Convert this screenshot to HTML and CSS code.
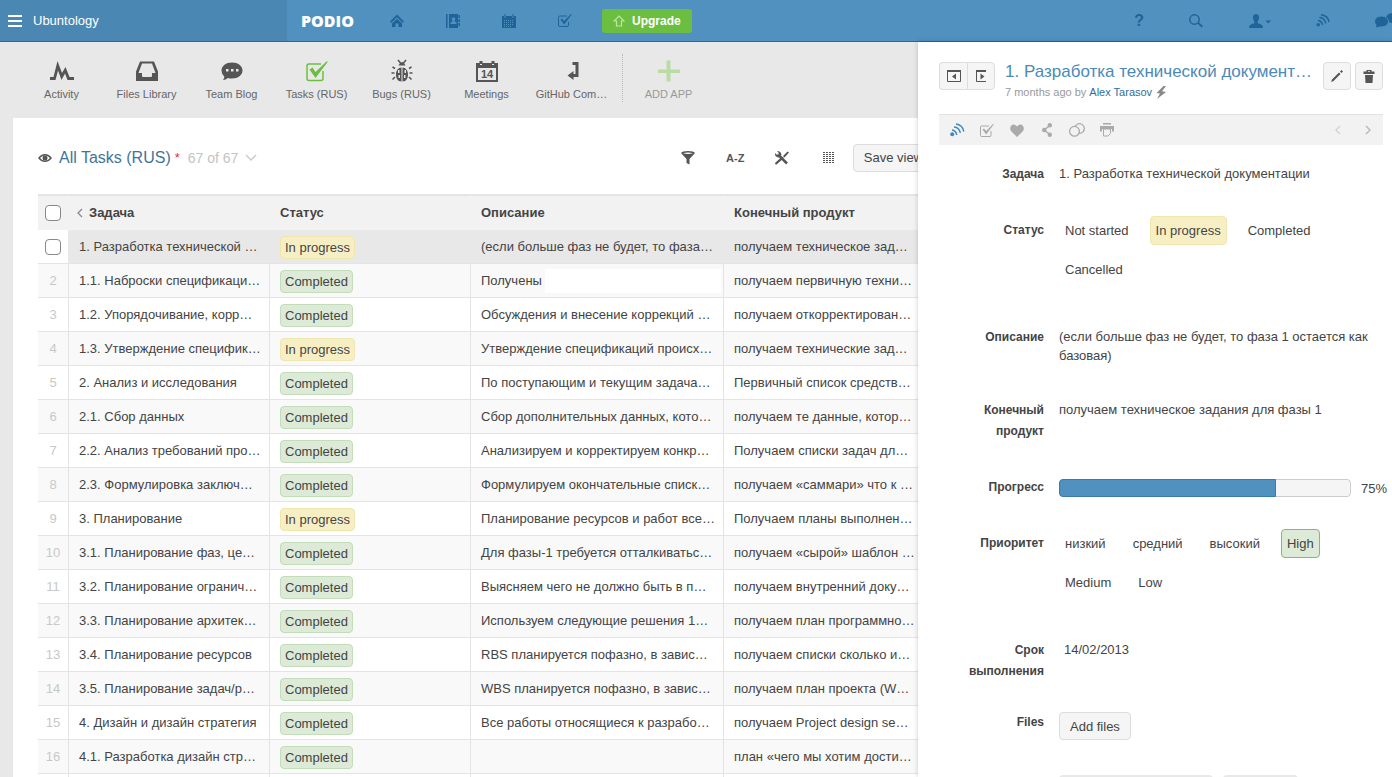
FILE: index.html
```html
<!DOCTYPE html>
<html lang="en">
<head>
    <meta charset="UTF-8">
    <meta name="viewport" content="width=device-width, initial-scale=1.0">
    <title>Tasks (RUS) - Podio</title>
    <link rel="stylesheet" href="styles.css">
</head>
<body>
    <header class="topbar">
        <button class="space-switcher">
            <svg width="14" height="12" viewBox="0 0 14 12"><path d="M0 1h14M0 6h14M0 11h14" stroke="#fff" stroke-width="2"/></svg>
            Ubuntology
        </button>
        <a href="#" class="logo">PODIO</a>
        <nav class="main-nav">
            <a href="#" aria-label="Home"><svg width="14" height="13" viewBox="0 0 14 13"><path d="M0 7.5 7 .5l7 7-1.300 1.300L7 3.200 1.300 8.800z"/><path d="M2 9.500 7 4.700l5 4.800V13H8.500V9.500h-3V13H2z"/></svg></a>
            <a href="#" aria-label="Contacts"><svg width="14" height="14" viewBox="0 0 14 14"><path d="M0 0h1.500v14H0zM3 0h9v14H3zM12.500 1H14v3h-1.500zM12.500 5H14v3h-1.500zM12.500 9H14v3h-1.500z"/><circle cx="7.500" cy="5" r="1.800" fill="#5091bf"/><path d="M4.500 10V8.500l2-1V6h2v1.500l2 1V10z" fill="#5091bf"/></svg></a>
            <a href="#" aria-label="Calendar"><svg width="14" height="14" viewBox="0 0 14 14"><path d="M0 2h2v1.500h2V2h6v1.500h2V2h2v12H0z"/><path d="M2.500 0h1v3h-1zM10.500 0h1v3h-1z"/><path d="M2 6.500h10M2 8.500h10M2 10.500h10M2 12.500h7" stroke="#5091bf" stroke-dasharray="1 1"/></svg></a>
            <a href="#" aria-label="Tasks"><svg width="14" height="13" viewBox="0 0 14 13"><path d="M9 2H2Q.5 2 .5 3.500V11Q.5 12.500 2 12.500h7q1.500 0 1.500-1.500V8" fill="none" stroke="#1f6398"/><path d="m2.500 5.500 1.500-1 2 2.500L13 0h1L6.200 10.500z"/></svg></a>
        </nav>
        <button class="upgrade">
            <svg width="12" height="12" viewBox="0 0 12 12"><path d="M6 1 11 6H8.500v5h-5V6H1z" fill="none" stroke="#bfe6a6" stroke-width="1.200"/></svg>
            Upgrade
        </button>
        <div class="user-nav">
            <a href="#" class="help" aria-label="Help">?</a>
            <a href="#" aria-label="Search"><svg width="15" height="14" viewBox="0 0 15 14"><circle cx="5.500" cy="5.500" r="4.700" fill="none" stroke="#1f6398" stroke-width="1.500"/><path d="m8.500 9.500 1.200-1.200L14 12l-1.500 1.500z"/></svg></a>
            <a href="#" aria-label="Account"><svg width="22" height="14" viewBox="0 0 22 14"><path d="M7 0c2 0 3 1.500 3 3.500S9 7 8.500 8v1L12 10.500q2 .7 2 3.500H0q0-2.800 2-3.500L5.500 9V8C5 7 4 5.500 4 3.500S5 0 7 0zM16.500 6.500H22L19.200 9.500z"/></svg></a>
            <a href="#" aria-label="Stream"><svg width="14" height="13" viewBox="0 0 14 13"><circle cx="2.200" cy="10.800" r="1.800"/><path d="M2 6.500Q6 7 6.500 11M3.500 3.500Q9 4 9.700 9.500M5 .8q7 .7 8 7.200" fill="none" stroke="#1f6398" stroke-width="1.400"/></svg></a>
            <a href="#" aria-label="Chat"><svg width="24" height="15" viewBox="0 0 24 15"><ellipse cx="18" cy="5" rx="7" ry="5"/><ellipse cx="6.500" cy="8.500" rx="7" ry="5.500" stroke="#5091bf"/><path d="m2 11-1 3.500 5-1.500z"/></svg></a>
        </div>
    </header>

    <div class="workspace">
        <main class="main">
            <nav class="apps">
                <a href="#" class="app">
                    <svg width="24" height="24" viewBox="0 0 24 24"><path d="M0 18h3.500L7.500 2 12 14l3.500-6 4 10H24v3h-6.500L15 14.500 11.500 21 8 11.500 5.500 21H0z"/></svg>
                    Activity
                </a>
                <a href="#" class="app">
                    <svg width="24" height="24" viewBox="0 0 24 24"><path fill-rule="evenodd" d="M5 2.500h14l4 10V22H1v-9.500zM7 4.500 3.500 14H7v3q0 1 1 1h8q1 0 1-1v-3h3.500L17 4.500z"/></svg>
                    Files Library
                </a>
                <a href="#" class="app">
                    <svg width="24" height="24" viewBox="0 0 24 24"><path d="M12 3.500c6 0 10.500 3.300 10.500 8s-4.500 8-10.500 8q-2.200 0-4.200-.6Q6 21 3 21q1.400-1.600 1.300-3.500-2.800-2.300-2.800-6C1.500 6.800 6 3.500 12 3.500z"/><path d="M6 10h2.500v2.500H6zM11 10h2.500v2.500H11zM16 10h2.500v2.500H16z" fill="#e8e8e8"/></svg>
                    Team Blog
                </a>
                <a href="#" class="app app-active">
                    <svg width="24" height="24" viewBox="0 0 24 24"><path d="M16 5H4Q2 5 2 7v12.500q0 2 2 2h12q2 0 2-2V12" fill="none" stroke="#6cbe40" stroke-width="1.500"/><path d="m4.500 10.500 3-2 3 4.500L21.500 2.500H23L10.500 19z"/></svg>
                    Tasks (RUS)
                </a>
                <a href="#" class="app">
                    <svg width="24" height="24" viewBox="0 0 24 24"><g fill="none" stroke="#555" stroke-width="1.500"><path d="m8 1 2.500 3h3L16 1M5 9.500 2.500 8M19 9.500 21.500 8M4.500 14H1.500M19.500 14h3M5 18l-2.500 2.500M19 18l2.500 2.500"/></g><path d="M8.500 6.500 10 4h4l1.500 2.500zM11.500 8.500V22.500c-4 0-5.500-3.500-5.500-7s1.500-6.500 5.500-7zM12.500 8.500v14c4 0 5.500-3.500 5.500-7s-1.500-6.500-5.500-7z"/><path d="M8 11h1.500v3H8zM8.500 16H10v3H8.500zM14.500 11H16v3h-1.500zM14 16h1.500v3H14z" fill="#e8e8e8"/></svg>
                    Bugs (RUS)
                </a>
                <a href="#" class="app">
                    <svg width="24" height="24" viewBox="0 0 24 24"><path fill-rule="evenodd" d="M1 4h3.500V2h3v2h9V2h3v2H23v19H1zM3 9v12h18V9z"/><path d="M5 5.500h2M17 5.500h2" stroke="#e8e8e8"/><text x="12" y="19" text-anchor="middle" class="cal-day">14</text></svg>
                    Meetings
                </a>
                <a href="#" class="app">
                    <svg width="24" height="24" viewBox="0 0 24 24"><path d="M12.500 4.500H17v12h-4" fill="none" stroke="#555" stroke-width="3"/><path d="m7.500 16.500 6-4.500v9z"/></svg>
                    GitHub Com…
                </a>
                <a href="#" class="app app-add">
                    <svg width="24" height="24" viewBox="0 0 24 24"><path d="M9.500 1.500h4v9H23v3.500h-9.500v8.500h-4V14H1v-3.500h8.500z"/></svg>
                    ADD APP
                </a>
            </nav>

            <section class="card">
                <div class="list">
                    <div class="view-bar">
                        <svg width="14" height="8" viewBox="0 0 14 8"><path fill-rule="evenodd" d="M0 4q3-4 7-4t7 4q-3 4-7 4T0 4zm2 0q2 2.500 5 2.500T12 4Q10 1.500 7 1.500T2 4z" fill="#555"/><circle cx="7" cy="4" r="2.500" fill="#555"/></svg>
                        <h1><a href="#">All Tasks (RUS)</a></h1>
                        <span class="unsaved">*</span>
                        <span class="count">67 of 67</span>
                        <svg width="12" height="7" viewBox="0 0 12 7"><path d="m1 1 5 5 5-5" fill="none" stroke="#ccc" stroke-width="1.500"/></svg>
                        <div class="tools">
                            <button class="tool" aria-label="Filter"><svg width="14" height="14" viewBox="0 0 14 14"><path fill-rule="evenodd" d="M0 2q1-2 7-2t7 2L8.500 8v5.500l-3-1.500V8zM2 2.200q5 1.600 10 0-5-1.600-10 0z"/></svg></button>
                            <button class="tool">A-Z</button>
                            <button class="tool" aria-label="Settings"><svg width="14" height="14" viewBox="0 0 14 14"><path d="M.5 13.500 0 12l7-6.500 2 1.500-7.500 6.500zM8 5l4.500-4.500 1.500 1-4.500 5z"/><path d="M4 4.500 12 12.500" stroke="#555" stroke-width="2.500"/><path d="M2 0l1.500 1.500v2H1.500L0 2q-.5 4 4 4.500L6.500 4Q6 0 2 0z"/></svg></button>
                            <button class="tool" aria-label="Layout"><svg width="12" height="12" viewBox="0 0 12 12"><path d="M0 .5h12M0 2.500h12M0 4.500h12M0 6.500h12M0 8.500h12M0 10.500h12" stroke="#555" stroke-dasharray="2 1"/></svg></button>
                            <button class="btn">Save view</button>
                        </div>
                    </div>

                    <table class="tasks">
                        <colgroup>
                            <col class="col-num">
                            <col class="col-task">
                            <col class="col-status">
                            <col class="col-desc">
                            <col class="col-product">
                        </colgroup>
                        <thead>
                            <tr>
                                <th><input type="checkbox" aria-label="Select all"></th>
                                <th class="sorted"><svg width="6" height="10" viewBox="0 0 6 10"><path d="M5 1 1 5l4 4" fill="none" stroke="#888" stroke-width="1.300"/></svg>Задача</th>
                                <th>Статус</th>
                                <th>Описание</th>
                                <th>Конечный продукт</th>
                            </tr>
                        </thead>
                        <tbody>
                            <tr class="selected">
                                <td><input type="checkbox" aria-label="Select task 1"></td>
                                <td>1. Разработка технической …</td>
                                <td><span class="tag yellow">In progress</span></td>
                                <td>(если больше фаз не будет, то фаза…</td>
                                <td>получаем техническое зад…</td>
                            </tr>
                            <tr>
                                <td>2</td>
                                <td>1.1. Наброски спецификаци…</td>
                                <td><span class="tag green">Completed</span></td>
                                <td><div class="partial">Получены<span class="blank"></span></div></td>
                                <td>получаем первичную техни…</td>
                            </tr>
                            <tr>
                                <td>3</td>
                                <td>1.2. Упорядочивание, корр…</td>
                                <td><span class="tag green">Completed</span></td>
                                <td>Обсуждения и внесение коррекций …</td>
                                <td>получаем откорректирован…</td>
                            </tr>
                            <tr>
                                <td>4</td>
                                <td>1.3. Утверждение специфик…</td>
                                <td><span class="tag yellow">In progress</span></td>
                                <td>Утверждение спецификаций происх…</td>
                                <td>получаем технические зад…</td>
                            </tr>
                            <tr>
                                <td>5</td>
                                <td>2. Анализ и исследования</td>
                                <td><span class="tag green">Completed</span></td>
                                <td>По поступающим и текущим задача…</td>
                                <td>Первичный список средств…</td>
                            </tr>
                            <tr>
                                <td>6</td>
                                <td>2.1. Сбор данных</td>
                                <td><span class="tag green">Completed</span></td>
                                <td>Сбор дополнительных данных, кото…</td>
                                <td>получаем те данные, котор…</td>
                            </tr>
                            <tr>
                                <td>7</td>
                                <td>2.2. Анализ требований про…</td>
                                <td><span class="tag green">Completed</span></td>
                                <td>Анализируем и корректируем конкр…</td>
                                <td>Получаем списки задач дл…</td>
                            </tr>
                            <tr>
                                <td>8</td>
                                <td>2.3. Формулировка заключ…</td>
                                <td><span class="tag green">Completed</span></td>
                                <td>Формулируем окончательные списк…</td>
                                <td>получаем «саммари» что к …</td>
                            </tr>
                            <tr>
                                <td>9</td>
                                <td>3. Планирование</td>
                                <td><span class="tag yellow">In progress</span></td>
                                <td>Планирование ресурсов и работ все…</td>
                                <td>Получаем планы выполнен…</td>
                            </tr>
                            <tr>
                                <td>10</td>
                                <td>3.1. Планирование фаз, це…</td>
                                <td><span class="tag green">Completed</span></td>
                                <td>Для фазы-1 требуется отталкиватьс…</td>
                                <td>получаем «сырой» шаблон …</td>
                            </tr>
                            <tr>
                                <td>11</td>
                                <td>3.2. Планирование огранич…</td>
                                <td><span class="tag green">Completed</span></td>
                                <td>Выясняем чего не должно быть в п…</td>
                                <td>получаем внутренний доку…</td>
                            </tr>
                            <tr>
                                <td>12</td>
                                <td>3.3. Планирование архитек…</td>
                                <td><span class="tag green">Completed</span></td>
                                <td>Используем следующие решения 1…</td>
                                <td>получаем план программно…</td>
                            </tr>
                            <tr>
                                <td>13</td>
                                <td>3.4. Планирование ресурсов</td>
                                <td><span class="tag green">Completed</span></td>
                                <td>RBS планируется пофазно, в завис…</td>
                                <td>получаем списки сколько и…</td>
                            </tr>
                            <tr>
                                <td>14</td>
                                <td>3.5. Планирование задач/р…</td>
                                <td><span class="tag green">Completed</span></td>
                                <td>WBS планируется пофазно, в завис…</td>
                                <td>получаем план проекта (W…</td>
                            </tr>
                            <tr>
                                <td>15</td>
                                <td>4. Дизайн и дизайн стратегия</td>
                                <td><span class="tag green">Completed</span></td>
                                <td>Все работы относящиеся к разрабо…</td>
                                <td>получаем Project design se…</td>
                            </tr>
                            <tr>
                                <td>16</td>
                                <td>4.1. Разработка дизайн стр…</td>
                                <td><span class="tag green">Completed</span></td>
                                <td></td>
                                <td>план «чего мы хотим дости…</td>
                            </tr>
                            <tr>
                                <td></td>
                                <td></td>
                                <td></td>
                                <td></td>
                                <td></td>
                            </tr>
                        </tbody>
                    </table>
                </div>
            </section>
        </main>

        <aside class="panel">
            <div class="panel-head">
                <div class="btn-group">
                    <button class="btn btn-icon" aria-label="Previous item"><svg width="14" height="12" viewBox="0 0 14 12"><path d="M.5 1v10.500h13V1" fill="none" stroke="#555"/><path d="M0 0h14v2H0zM9 3.500v6L5 6.500z"/></svg></button>
                    <button class="btn btn-icon" aria-label="Next item"><svg width="14" height="12" viewBox="0 0 14 12"><path d="M2.500 1v10.500H12" fill="none" stroke="#555"/><path d="M2 0h10v2H2zM6.500 3.500v6l4-3z"/></svg></button>
                </div>
                <div class="panel-title">
                    <h2><a href="#">1. Разработка технической документ…</a></h2>
                    <p>7 months ago by <a href="#">Alex Tarasov</a>
                        <svg width="12" height="13" viewBox="0 0 12 13"><path d="M8.500 0 1.500 7l3.500.5L2 13l9-7-4-.7L11 0z" fill="#888"/></svg>
                    </p>
                </div>
                <button class="btn btn-icon" aria-label="Edit"><svg width="12" height="12" viewBox="0 0 12 12"><path d="m0 12 1-2.500 7-7L9.500 4l-7 7zM9 1.500 10.500 0 12 1.500 10.500 3z"/></svg></button>
                <button class="btn btn-icon" aria-label="Delete"><svg width="12" height="13" viewBox="0 0 12 13"><path fill-rule="evenodd" d="M3.500 0h5v1.500h3V4H.5V1.500h3zM5 1v.7h2V1zM2 5h8l-.5 8h-7z"/></svg></button>
            </div>

            <div class="panel-tools">
                <button class="on" aria-label="Follow"><svg width="15" height="14" viewBox="0 0 15 14"><circle cx="2.200" cy="11.200" r="2"/><path d="M2 7Q6 7.500 6.800 12M4 4q5.500.5 6.300 6M6 1q6.500.7 7.800 7.500" fill="none" stroke="#4288bd" stroke-width="1.400"/></svg></button>
                <button aria-label="Add task"><svg width="14" height="13" viewBox="0 0 14 13"><path d="M9 2H1.500Q.5 2 .5 3v8.500q0 1 1 1H10q1 0 1-1V7" fill="none" stroke="#aaa"/><path d="m2.500 5.500 1.500-1 2.200 2.500L13 0h1L6.200 10.500z"/></svg></button>
                <button aria-label="Like"><svg width="14" height="13" viewBox="0 0 14 13"><path d="M7 13 1 7Q-.7 4.500 1 2q2.500-3 6 .5Q10.500-1 13 2q1.700 2.500 0 5z"/></svg></button>
                <button aria-label="Share"><svg width="10" height="14" viewBox="0 0 10 14"><path d="M8 2.500 2 7l6 4.500" fill="none" stroke="#aaa" stroke-width="1.500"/><circle cx="7.800" cy="2.300" r="2.200"/><circle cx="2.300" cy="7" r="2.300"/><circle cx="7.800" cy="11.700" r="2.200"/></svg></button>
                <button aria-label="Reference"><svg width="16" height="14" viewBox="0 0 16 14"><g fill="#f2f2f2" stroke="#aaa" stroke-width="1.300"><circle cx="10.500" cy="5.500" r="4.800"/><circle cx="5.500" cy="8.300" r="4.900"/></g></svg></button>
                <button aria-label="Print"><svg width="14" height="14" viewBox="0 0 14 14"><path d="M3 0h8v1.500H3zM0 3h14v5.500h-2V6H2v2.500H0z"/><path d="M3.500 6v7h4.500l2.500-2.500V6z" fill="#f2f2f2" stroke="#aaa"/></svg></button>
                <div class="pager">
                    <button aria-label="Previous"><svg width="6" height="10" viewBox="0 0 6 10"><path d="M5 1 1 5l4 4" fill="none" stroke="#d5d5d5" stroke-width="1.500"/></svg></button>
                    <button aria-label="Next"><svg width="6" height="10" viewBox="0 0 6 10"><path d="m1 1 4 4-4 4" fill="none" stroke="#bbb" stroke-width="1.500"/></svg></button>
                </div>
            </div>

            <dl class="fields">
                <dt>Задача</dt>
                <dd>1. Разработка технической документации</dd>
                <dt>Статус</dt>
                <dd class="options">
                    <button class="option">Not started</button>
                    <button class="option yellow">In progress</button>
                    <button class="option">Completed</button>
                    <button class="option">Cancelled</button>
                </dd>
                <dt>Описание</dt>
                <dd>(если больше фаз не будет, то фаза 1 остается как базовая)</dd>
                <dt>Конечный продукт</dt>
                <dd>получаем техническое задания для фазы 1</dd>
                <dt>Прогресс</dt>
                <dd class="progress">
                    <div class="bar" role="progressbar" aria-valuenow="75" aria-label="Прогресс"><div class="fill" style="width: 75%"></div></div>
                    <span>75%</span>
                </dd>
                <dt>Приоритет</dt>
                <dd class="options">
                    <button class="option">низкий</button>
                    <button class="option">средний</button>
                    <button class="option">высокий</button>
                    <button class="option high">High</button>
                    <button class="option">Medium</button>
                    <button class="option">Low</button>
                </dd>
                <dt class="date">Срок выполнения</dt>
                <dd class="date"><span class="date-value">14/02/2013</span></dd>
                <dt>Files</dt>
                <dd><button class="btn">Add files</button></dd>
                <dd class="more">
                    <span class="more-wide"></span>
                    <span class="more-small"></span>
                </dd>
            </dl>
        </aside>
    </div>
</body>
</html>
```

FILE: styles.css
```css
/* Basic styling */
* {
    box-sizing: border-box;
}
body {
    font-family: "Liberation Sans", Arial, sans-serif;
    font-size: 13px;
    color: #444;
    margin: 0;
    height: 100vh;
    display: flex;
    flex-direction: column;
    overflow: hidden;
    background-color: #e8e8e8;
}
a {
    text-decoration: none;
}
button {
    font: inherit;
    color: inherit;
    margin: 0;
    padding: 0;
    border: none;
    background: none;
    cursor: pointer;
}
svg {
    display: block;
    flex: none;
}
h1,
h2,
p,
dl,
dd {
    margin: 0;
}
/* Top bar */
.topbar {
    display: flex;
    align-items: center;
    flex: none;
    height: 42px;
    background-color: #5091bf;
    border-bottom: 1px solid #33678e;
    overflow: hidden;
}
.topbar svg {
    fill: #1f6398;
}
.space-switcher {
    display: flex;
    align-items: center;
    gap: 11px;
    width: 287px;
    height: 100%;
    padding-left: 8px;
    background-color: #4b87b3;
    color: #fff;
    font-size: 13px;
}
.logo {
    margin-left: 14px;
    width: 68px;
    font-family: "Open Sans", sans-serif;
    font-size: 16px;
    font-weight: 800;
    color: #fff;
}
.main-nav {
    display: flex;
}
.main-nav a {
    display: flex;
    justify-content: center;
    width: 56px;
}
.upgrade {
    display: flex;
    align-items: center;
    gap: 7px;
    height: 24px;
    margin-left: 9px;
    padding: 0 11px;
    border-radius: 3px;
    background-color: #6cbe40;
    color: #fff;
    font-size: 12px;
    font-weight: bold;
}
.user-nav {
    display: flex;
    align-items: center;
    gap: 45px;
    margin-left: auto;
    margin-right: -7px;
}
.help {
    color: #1f6398;
    font-size: 16px;
    font-weight: bold;
}
/* Layout */
.workspace {
    flex: 1;
    min-height: 0;
    display: flex;
}
.main {
    flex: 1;
    min-width: 0;
    display: flex;
    flex-direction: column;
    overflow: hidden;
}
/* App bar */
.apps {
    display: flex;
    flex: none;
    height: 76px;
    padding: 12px 0 16px 19px;
}
.app {
    display: flex;
    flex-direction: column;
    align-items: center;
    justify-content: space-between;
    width: 85px;
    padding: 5px 0 2px;
    color: #666;
    font-size: 11px;
    line-height: 12px;
}
.app svg {
    fill: #555;
}
.app-active svg {
    fill: #6cbe40;
}
.cal-day {
    font-size: 11px;
    font-weight: bold;
}
.app-add {
    width: 92px;
    margin-left: 8px;
    border-left: 1px dotted #bbb;
    color: #999;
}
.app-add svg {
    fill: #b9dba6;
}
/* Task list */
.card {
    flex: 1;
    min-height: 0;
    margin-left: 13px;
    padding-left: 25px;
    background-color: #fff;
    overflow: hidden;
}
.list {
    min-width: 896px;
}
.view-bar {
    display: flex;
    align-items: center;
    height: 76px;
    padding-top: 3px;
}
.view-bar h1 {
    margin-left: 7px;
    font-size: 16px;
    font-weight: normal;
}
.view-bar h1 a {
    color: #3f7499;
}
.unsaved {
    margin: 0 8px 0 4px;
    color: #d33;
}
.count {
    margin-right: 7px;
    color: #c4c4c4;
    font-size: 14px;
}
.tools {
    display: flex;
    align-items: center;
    margin-left: auto;
}
.tool {
    display: flex;
    justify-content: center;
    width: 47px;
    color: #555;
    font-size: 11px;
    font-weight: bold;
}
.tool svg {
    fill: #555;
}
.btn {
    height: 28px;
    padding: 0 10px;
    border: 1px solid #ddd;
    border-radius: 4px;
    background-color: #f5f5f5;
    white-space: nowrap;
}
.tasks {
    width: 100%;
    table-layout: fixed;
    border-collapse: separate;
    border-spacing: 0;
}
.col-num {
    width: 31px;
}
.col-task,
.col-status {
    width: 201px;
}
.col-desc {
    width: 253px;
}
.tasks th {
    height: 36px;
    padding: 0 10px 2px;
    border-top: 2px solid #e4e4e4;
    border-right: 1px solid #f2f2f2;
    background-color: #f2f2f2;
    text-align: left;
}
.tasks th svg {
    display: inline-block;
    margin-right: 6px;
    vertical-align: -1px;
}
.tasks td {
    height: 34px;
    padding: 0 10px;
    border-right: 1px solid #e4e4e4;
    border-bottom: 1px solid #e4e4e4;
    white-space: nowrap;
}
.tasks th:first-child,
.tasks td:first-child {
    padding: 0;
    text-align: center;
    color: #c8c8c8;
}
.tasks th.sorted {
    padding-left: 8px;
}
.tasks tr:nth-child(even) td {
    background-color: #f9f9f9;
}
.tasks .selected td {
    border-right-color: #e8e8e8;
    background-color: #e8e8e8;
}
.tasks .selected td:first-child {
    background-color: #fff;
}
input[type="checkbox"] {
    appearance: none;
    display: block;
    width: 16px;
    height: 16px;
    margin: 0 auto;
    border: 1px solid #888;
    border-radius: 4px;
    background-color: #fff;
}
.tag {
    display: block;
    width: max-content;
    height: 23px;
    margin-top: 2px;
    padding: 0 4px;
    border: 1px solid;
    border-radius: 4px;
    line-height: 21px;
}
.yellow {
    background-color: #f7efc4;
    border-color: #f0e6b0;
}
.green {
    background-color: #dcead7;
    border-color: #c3dcba;
}
.partial {
    display: flex;
    align-items: center;
    gap: 3px;
    margin-right: -8px;
}
.blank {
    flex: 1;
    height: 24px;
    background-color: #fff;
}
/* Item panel */
.panel {
    flex: 0 0 474px;
    padding: 20px 9px 0 21px;
    background-color: #fff;
    box-shadow: 0 0 5px rgba(0,0,0,0.2);
    overflow: hidden;
}
.panel-head {
    display: flex;
    gap: 4px;
    height: 52px;
}
.btn-group {
    display: flex;
}
.btn-group .btn:first-child {
    border-right: none;
    border-radius: 4px 0 0 4px;
}
.btn-group .btn:last-child {
    border-radius: 0 4px 4px 0;
}
.btn-icon {
    display: flex;
    align-items: center;
    justify-content: center;
    width: 28px;
    padding: 0;
}
.btn-icon svg {
    fill: #555;
}
.panel-title {
    flex: 1;
    min-width: 0;
    padding-left: 6px;
}
.panel-title h2 {
    font-size: 17px;
    font-weight: normal;
    line-height: 20px;
    white-space: nowrap;
}
.panel-title h2 a {
    color: #4b8ab8;
}
.panel-title p {
    display: flex;
    align-items: center;
    gap: 3px;
    color: #999;
    font-size: 11px;
    line-height: 20px;
}
.panel-title p a {
    color: #2f6d9b;
}
.panel-tools {
    display: flex;
    align-items: center;
    height: 31px;
    padding-left: 3px;
    border-top: 1px solid #e2e2e2;
    background-color: #f2f2f2;
}
.panel-tools button {
    display: flex;
    justify-content: center;
    width: 30px;
}
.panel-tools svg {
    fill: #aaa;
}
.panel-tools .on svg {
    fill: #4288bd;
}
.pager {
    display: flex;
    margin-left: auto;
}
.fields {
    display: grid;
    grid-template-columns: 105px 1fr;
    column-gap: 15px;
    padding-top: 19px;
}
.fields dt {
    padding-bottom: 35px;
    font-size: 12px;
    font-weight: bold;
    line-height: 21px;
    text-align: right;
}
.fields dd {
    padding-bottom: 35px;
    line-height: 19px;
}
.fields .date {
    padding-bottom: 30px;
}
.date-value {
    padding-left: 5px;
}
.fields .options {
    display: flex;
    flex-wrap: wrap;
    gap: 10px 15px;
    margin-top: -4px;
    padding-bottom: 43px;
}
.option {
    height: 29px;
    padding: 0 5px;
    border: 1px solid transparent;
    border-radius: 4px;
}
.option.yellow {
    border-color: #f0e6b0;
}
.option.high {
    border-color: #8fb183;
    background-color: #dcead7;
}
.progress {
    display: flex;
    align-items: flex-start;
    gap: 10px;
    margin-right: -4px;
    padding-top: 2px;
}
.bar {
    flex: 1;
    height: 18px;
    border: 1px solid #ccc;
    border-radius: 4px;
    background-color: #f5f5f5;
}
.fill {
    height: 18px;
    margin: -1px;
    border: 1px solid #3b7ba9;
    border-radius: 4px 0 0 4px;
    background-color: #5091bf;
}
.fields .more {
    grid-column: 2;
    display: flex;
    gap: 10px;
}
.more span {
    height: 28px;
    border-radius: 4px;
    background-color: #e8e8e8;
}
.more .more-wide {
    width: 154px;
}
.more .more-small {
    width: 75px;
}
```
